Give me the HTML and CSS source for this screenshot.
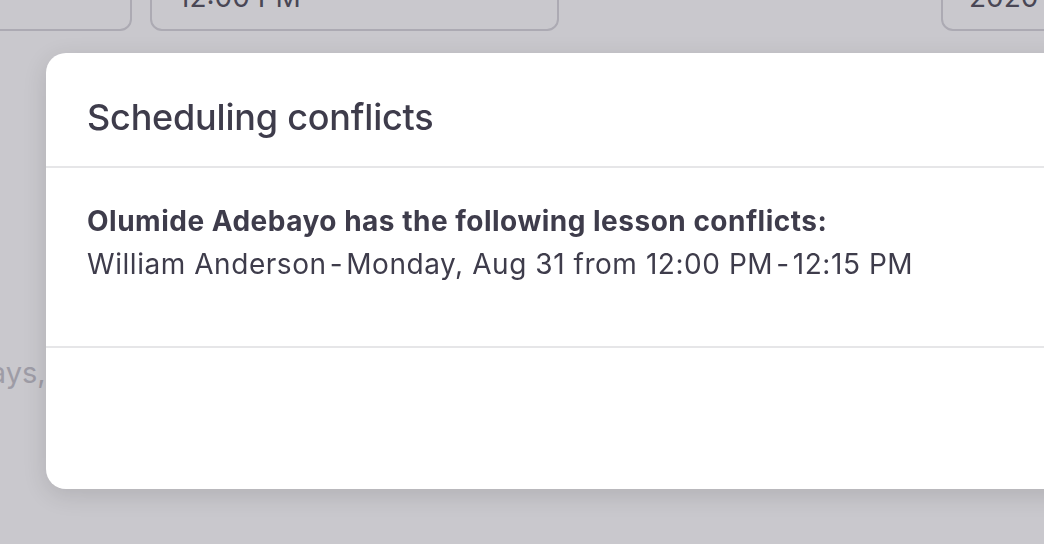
FILE: index.html
```html
<!DOCTYPE html>
<html>
<head>
    <meta charset="UTF-8">
    <title>Scheduling conflicts</title>
    <link rel="stylesheet" href="styles.css">
</head>
<body>
    <div class="page">
        <div class="field-row">
            <div class="field field-date"></div>
            <div class="field field-time">12:00 PM</div>
            <div class="field field-year">2020</div>
        </div>
        <p class="note">Repeats on weekdays, until the end of the term</p>
    </div>

    <div class="overlay"></div>

    <div class="modal">
        <div class="modal-header">
            <h2>Scheduling conflicts</h2>
        </div>
        <div class="modal-body">
            <p class="conflict-title">Olumide Adebayo has the following lesson conflicts:</p>
            <p class="conflict-item">William Anderson&#8202;-&#8202;Monday, Aug 31 from 12:00 PM&#8202;-&#8202;12:15 PM</p>
        </div>
        <div class="modal-footer"></div>
    </div>
</body>
</html>
```

FILE: styles.css
```css
body {
    font-family: Inter, "Noto Sans", sans-serif;
    margin: 0;
    background-color: #fff;
    color: #3e3c4b;
    overflow: hidden;
    height: 544px;
}
.field-row {
    display: flex;
    gap: 18px;
    margin-top: -27px;
    margin-left: -60px;
}
.field {
    flex-shrink: 0;
    height: 58px;
    border: 2px solid #d8d7dc;
    border-radius: 12px;
    box-sizing: border-box;
    font-size: 28px;
    color: #55535f;
    padding: 0 26px;
    line-height: 44px;
}
.field-date {
    width: 192px;
}
.field-time {
    width: 409px;
}
.field-year {
    width: 200px;
    margin-left: 364px;
}
.note {
    margin: 324px 0 0 -262px;
    font-size: 29px;
    color: #c6c5cb;
    white-space: nowrap;
}
.overlay {
    position: fixed;
    inset: 0;
    background: rgba(40, 36, 56, 0.25);
}
.modal {
    position: absolute;
    top: 53px;
    left: 46px;
    width: 1080px;
    background: #fff;
    border-radius: 20px;
    box-shadow: 0 6px 24px rgba(0, 0, 0, 0.12);
}
.modal-header {
    height: 115px;
    box-sizing: border-box;
    border-bottom: 2px solid #e6e6e8;
    padding: 43px 41px 0;
}
.modal-header h2 {
    margin: 0;
    font-size: 36px;
    line-height: 43px;
    font-weight: 500;
    letter-spacing: -0.2px;
}
.modal-body {
    height: 180px;
    border-bottom: 2px solid #e6e6e8;
    padding: 32px 41px 0;
    box-sizing: border-box;
}
.modal-body p {
    margin: 0;
    font-size: 28px;
    line-height: 43px;
}
.conflict-title {
    font-weight: 700;
    letter-spacing: 0.5px;
}
.conflict-item {
    letter-spacing: 0.55px;
}
.modal-footer {
    height: 141px;
}
```
